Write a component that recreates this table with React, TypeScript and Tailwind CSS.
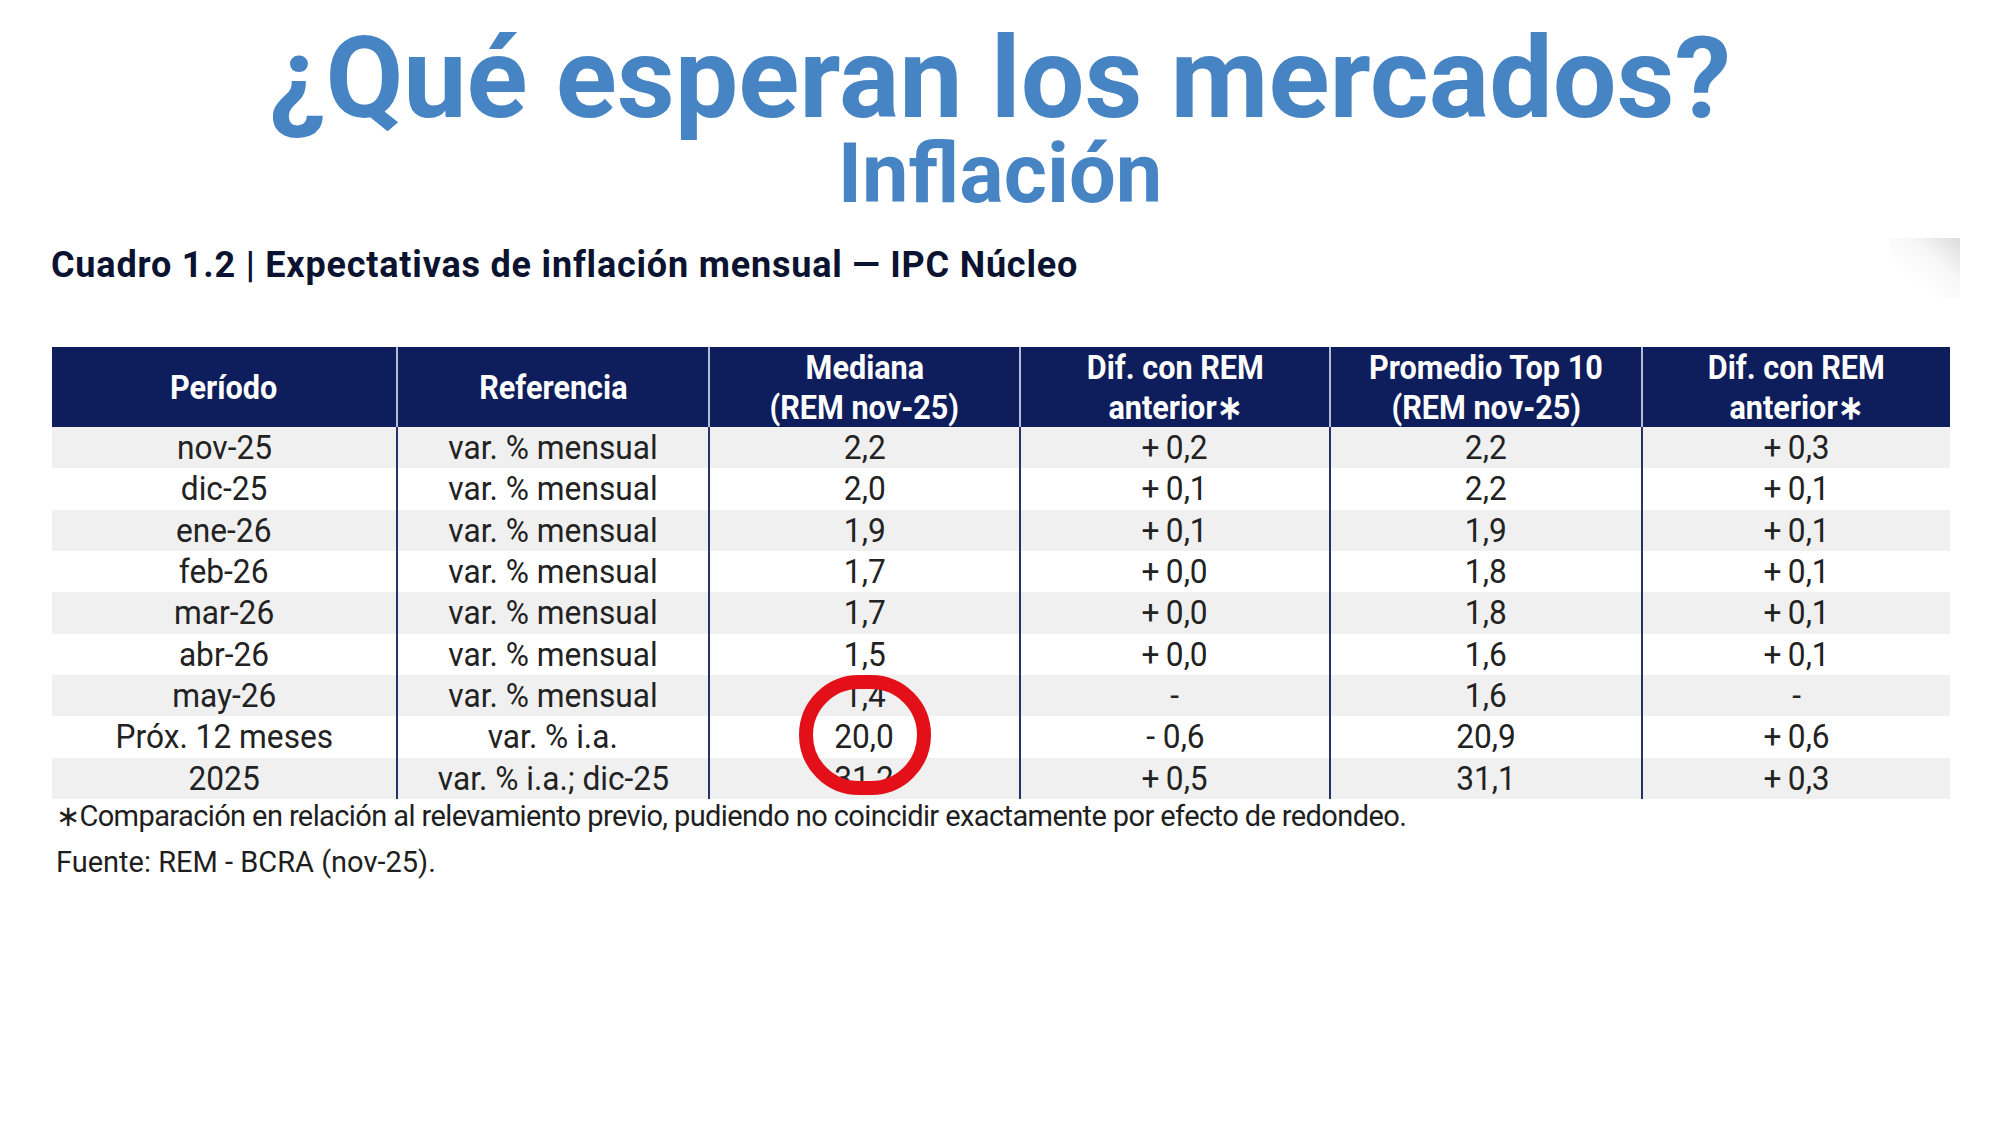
import React from 'react'

const headers: string[][] = [
  ['Período'],
  ['Referencia'],
  ['Mediana', '(REM nov-25)'],
  ['Dif. con REM', 'anterior∗'],
  ['Promedio Top 10', '(REM nov-25)'],
  ['Dif. con REM', 'anterior∗'],
]

const rows: string[][] = [
  ['nov-25', 'var. % mensual', '2,2', '+\u20090,2', '2,2', '+\u20090,3'],
  ['dic-25', 'var. % mensual', '2,0', '+\u20090,1', '2,2', '+\u20090,1'],
  ['ene-26', 'var. % mensual', '1,9', '+\u20090,1', '1,9', '+\u20090,1'],
  ['feb-26', 'var. % mensual', '1,7', '+\u20090,0', '1,8', '+\u20090,1'],
  ['mar-26', 'var. % mensual', '1,7', '+\u20090,0', '1,8', '+\u20090,1'],
  ['abr-26', 'var. % mensual', '1,5', '+\u20090,0', '1,6', '+\u20090,1'],
  ['may-26', 'var. % mensual', '1,4', '-', '1,6', '-'],
  ['Próx. 12 meses', 'var. % i.a.', '20,0', '- 0,6', '20,9', '+\u20090,6'],
  ['2025', 'var. % i.a.; dic-25', '31,2', '+\u20090,5', '31,1', '+\u20090,3'],
]

const App = () => {
  return (
    <div className="w-[2000px] h-[1125px] bg-white overflow-hidden font-['Roboto','Noto_Sans',sans-serif]">
      {/* titulo */}
      <h1 className="pt-[29px] text-center text-[113px] leading-[100px] font-bold text-[#4784c4]">¿Qué esperan los mercados?</h1>
      <h2 className="mt-[10px] text-center text-[83px] leading-[70px] font-bold text-[#4784c4]">Inflación</h2>

      <div className="mt-[29px] pl-[51px] pr-[40px] flex items-start">
        <div className="mt-[9px] text-[36px] leading-[36px] font-bold text-[#0b1330] tracking-[0.8px]">
          Cuadro 1.2 | Expectativas de inflación mensual — IPC Núcleo
        </div>
        <div className="ml-auto w-[70px] h-[60px] bg-linear-to-bl from-[#dcdcdc] via-[#f7f7f7] via-35% to-white to-70%"></div>
      </div>

      <div className="mt-[49px] ml-[52px] w-[1898px] relative">
        <div className="grid grid-cols-[344px_312px_311px_310px_312px_309px] bg-[#0e1d5b] h-[80px]">
          {headers.map((h, i) => (
            <div key={i} className={`flex flex-col items-center justify-center text-white font-bold text-[34px] leading-[40px] ${i > 0 ? 'border-l-2 border-[#b4bdd3]' : ''}`}>
              {h.map((line, j) => (
                <span key={j} className="inline-block scale-x-[0.9] whitespace-nowrap">{line}</span>
              ))}
            </div>
          ))}
        </div>
        {rows.map((r, i) => (
          <div key={i} className={`grid grid-cols-[344px_312px_311px_310px_312px_309px] h-[41.33px] ${i % 2 === 0 ? 'bg-[#f0f0f0]' : 'bg-white'}`}>
            {r.map((c, j) => (
              <div key={j} className={`flex items-center justify-center text-[33px] leading-[33px] text-[#222222] ${j > 0 ? 'border-l-2 border-[#27326a]' : ''}`}>
                <span className="inline-block scale-x-[0.96] whitespace-pre">{c}</span>
              </div>
            ))}
          </div>
        ))}

        {/* circulo rojo */}
        <div className="absolute left-[747px] top-[328px] w-[132px] h-[120px] rounded-full border-[14px] border-[#e3101a]"></div>
      </div>

      <div className="mt-[-6px] pl-[56px] text-[29px] leading-[46px] text-[#1e1e1e]">
        <p className="tracking-[-0.6px]">∗Comparación en relación al relevamiento previo, pudiendo no coincidir exactamente por efecto de redondeo.</p>
        <p>Fuente: REM - BCRA (nov-25).</p>
      </div>
    </div>
  )
}

export default App
